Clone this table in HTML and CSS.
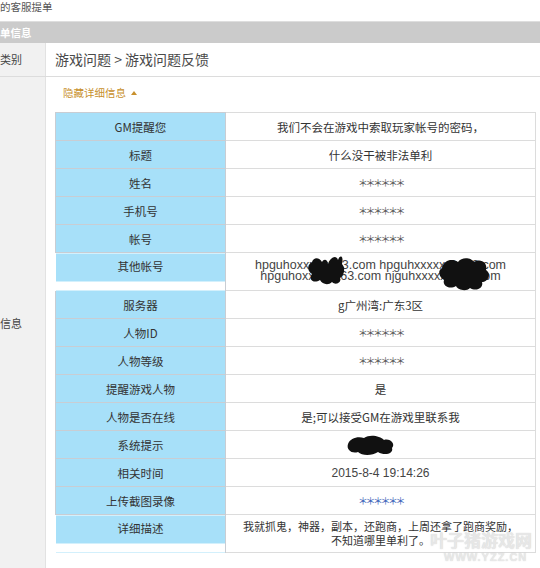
FILE: index.html
```html
<!DOCTYPE html>
<html lang="zh">
<head>
<meta charset="utf-8">
<title>客服提单</title>
<link rel="stylesheet" href="styles.css">
</head>
<body>
<div class="page">
  <div class="title">的客服提单</div>
  <div class="bar">单信息</div>
  <div class="row row-cat">
    <div class="side">类别</div>
    <div class="main cat">游戏问题 &gt; 游戏问题反馈</div>
  </div>
  <div class="row row-info">
    <div class="side side-mid">信息</div>
    <div class="main">
      <div class="toggle">隐藏详细信息 <span class="tri"></span></div>
      <table class="detail">
        <tr><td class="lab">GM提醒您</td><td class="val">我们不会在游戏中索取玩家帐号的密码，</td></tr>
        <tr><td class="lab">标题</td><td class="val">什么没干被非法单利</td></tr>
        <tr><td class="lab">姓名</td><td class="val star">＊＊＊＊＊＊</td></tr>
        <tr><td class="lab">手机号</td><td class="val star">＊＊＊＊＊＊</td></tr>
        <tr><td class="lab">帐号</td><td class="val star">＊＊＊＊＊＊</td></tr>
        <tr class="tall"><td class="lab lab-short">其他帐号</td><td class="val mail">hpguhoxxxxx163.com hpguhxxxxx@163.com<br>hpguhoxxxxx163.com njguhxxxxxx163.com</td></tr>
        <tr><td class="lab">服务器</td><td class="val">g广州湾:广东3区</td></tr>
        <tr><td class="lab">人物ID</td><td class="val star">＊＊＊＊＊＊</td></tr>
        <tr><td class="lab">人物等级</td><td class="val star">＊＊＊＊＊＊</td></tr>
        <tr><td class="lab">提醒游戏人物</td><td class="val">是</td></tr>
        <tr><td class="lab">人物是否在线</td><td class="val">是;可以接受GM在游戏里联系我</td></tr>
        <tr><td class="lab">系统提示</td><td class="val"></td></tr>
        <tr><td class="lab">相关时间</td><td class="val date">2015-8-4 19:14:26</td></tr>
        <tr><td class="lab">上传截图录像</td><td class="val star blue">＊＊＊＊＊＊</td></tr>
        <tr class="tall last"><td class="lab lab-short">详细描述</td><td class="val desc">我就抓鬼，神器，副本，还跑商，上周还拿了跑商奖励，<br>不知道哪里单利了。</td></tr>
      </table>
    </div>
  </div>

  <svg class="blob blob1" width="44" height="36" viewBox="0 0 44 36"><path d="M6 10 C8 4 14 6 16 10 C18 6 22 8 22 12 C24 6 30 2 32 8 C34 2 38 4 36 12 C40 16 38 24 34 26 C36 30 30 34 26 30 C22 34 16 32 14 28 C8 32 2 28 6 22 C0 18 2 12 6 10 Z" fill="#111"/></svg>
  <svg class="blob blob2" width="54" height="36" viewBox="0 0 54 36"><path d="M4 12 C6 4 14 2 20 6 C24 0 34 2 36 6 C42 2 50 6 48 14 C54 18 50 26 44 26 C46 32 38 36 32 32 C28 36 20 34 18 30 C12 34 4 30 6 24 C0 20 0 14 4 12 Z" fill="#111"/></svg>
  <svg class="blob blob3" width="50" height="22" viewBox="0 0 50 22"><path d="M2 10 C4 4 12 2 18 4 C24 0 34 2 38 6 C44 4 50 10 46 14 C48 20 38 22 32 18 C26 22 16 22 12 18 C6 20 0 16 2 10 Z" fill="#111"/></svg>
  <div class="mark"><div class="mark-cn">叶子猪游戏网</div><div class="mark-en">WWW.YZZ.CN</div></div>
</div>
</body>
</html>
```

FILE: styles.css
```css
html, body {
  margin: 0;
  padding: 0;
  background: #ffffff;
}
body {
  width: 540px;
  height: 568px;
  overflow: hidden;
  font-family: "Noto Sans CJK SC", "Liberation Sans", sans-serif;
  color: #333;
}
.page {
  position: relative;
  width: 540px;
  height: 568px;
}
.title {
  height: 20px;
  padding-top: 1px;
  font-size: 10.5px;
  line-height: 12px;
  color: #555;
}
.bar {
  height: 22px;
  background: #cbcbcb;
  border-top: 1px solid #dedede;
  box-sizing: border-box;
  color: #fff;
  font-weight: bold;
  font-size: 10.5px;
  line-height: 21px;
}
.row {
  display: flex;
  border-bottom: 1px solid #dcdcdc;
}
.row-cat {
  height: 34px;
  box-sizing: border-box;
}
.row-info {
  height: 491px;
  border-bottom: none;
}
.side {
  width: 45px;
  flex: none;
  background: #f1f1f1;
  border-right: 1px solid #e2e2e2;
  font-size: 11px;
  line-height: 33px;
  color: #444;
}
.side-mid {
  display: flex;
  align-items: center;
  line-height: 14px;
}
.main {
  flex: 1;
  padding-left: 9px;
}
.cat {
  font-size: 14px;
  line-height: 33px;
  color: #4a4a4a;
}
.toggle {
  padding: 9px 0 0 8px;
  height: 14px;
  line-height: 14px;
  font-size: 10.5px;
  color: #c8902c;
  margin-bottom: 12px;
}
.tri {
  display: inline-block;
  width: 0;
  height: 0;
  border-left: 3px solid transparent;
  border-right: 3px solid transparent;
  border-bottom: 4px solid #c8902c;
  margin-left: 3px;
  vertical-align: 2px;
}
.detail {
  border-collapse: collapse;
  width: 481px;
  font-size: 11.5px;
}
.detail td {
  height: 27px;
  padding: 0;
  text-align: center;
  vertical-align: middle;
  border: 1px solid #dcdcdc;
  line-height: 14px;
}
.detail td.lab {
  width: 169px;
  background: #a7e0f9;
  border-color: #c9cdd3;
  color: #333;
}
.detail .tall td {
  height: 37px;
}
.detail td.lab-short {
  vertical-align: top;
  line-height: 27px;
  background: linear-gradient(#a7e0f9 0, #a7e0f9 28px, #ffffff 28px);
  border-bottom-color: transparent;
  border-left-color: transparent;
}
.detail .tall + tr td.lab {
  border-top-color: #dcdcdc;
}
.val {
  color: #333;
}
.detail td.star {
  font-size: 10px;
  letter-spacing: -2.5px;
  color: #555;
}
.detail td.blue {
  color: #3a62b8;
}
.detail td.mail {
  font-family: "Liberation Sans", sans-serif;
  font-size: 12.5px;
  line-height: 11px;
  color: #444;
  vertical-align: top;
  padding-top: 7px;
  height: 30px;
}
.detail td.date {
  font-family: "Liberation Sans", sans-serif;
  font-size: 12px;
  color: #444;
}
.detail td.desc {
  vertical-align: top;
  padding-top: 4px;
  height: 33px;
  line-height: 14px;
  font-size: 11px;
}
.blob {
  position: absolute;
}
.blob1 { left: 306px; top: 252px; }
.blob2 { left: 438px; top: 256px; }
.blob3 { left: 346px; top: 434px; }
.mark {
  position: absolute;
  left: 430px;
  top: 530px;
  color: rgba(238, 238, 238, 0.8);
  text-shadow: 0 0 1px rgba(150, 150, 150, 0.5);
  font-weight: bold;
}
.mark-cn {
  font-size: 17px;
  line-height: 20px;
}
.mark-en {
  font-family: "Liberation Sans", sans-serif;
  font-size: 11px;
  line-height: 14px;
  letter-spacing: 1px;
  padding-left: 14px;
}
```
